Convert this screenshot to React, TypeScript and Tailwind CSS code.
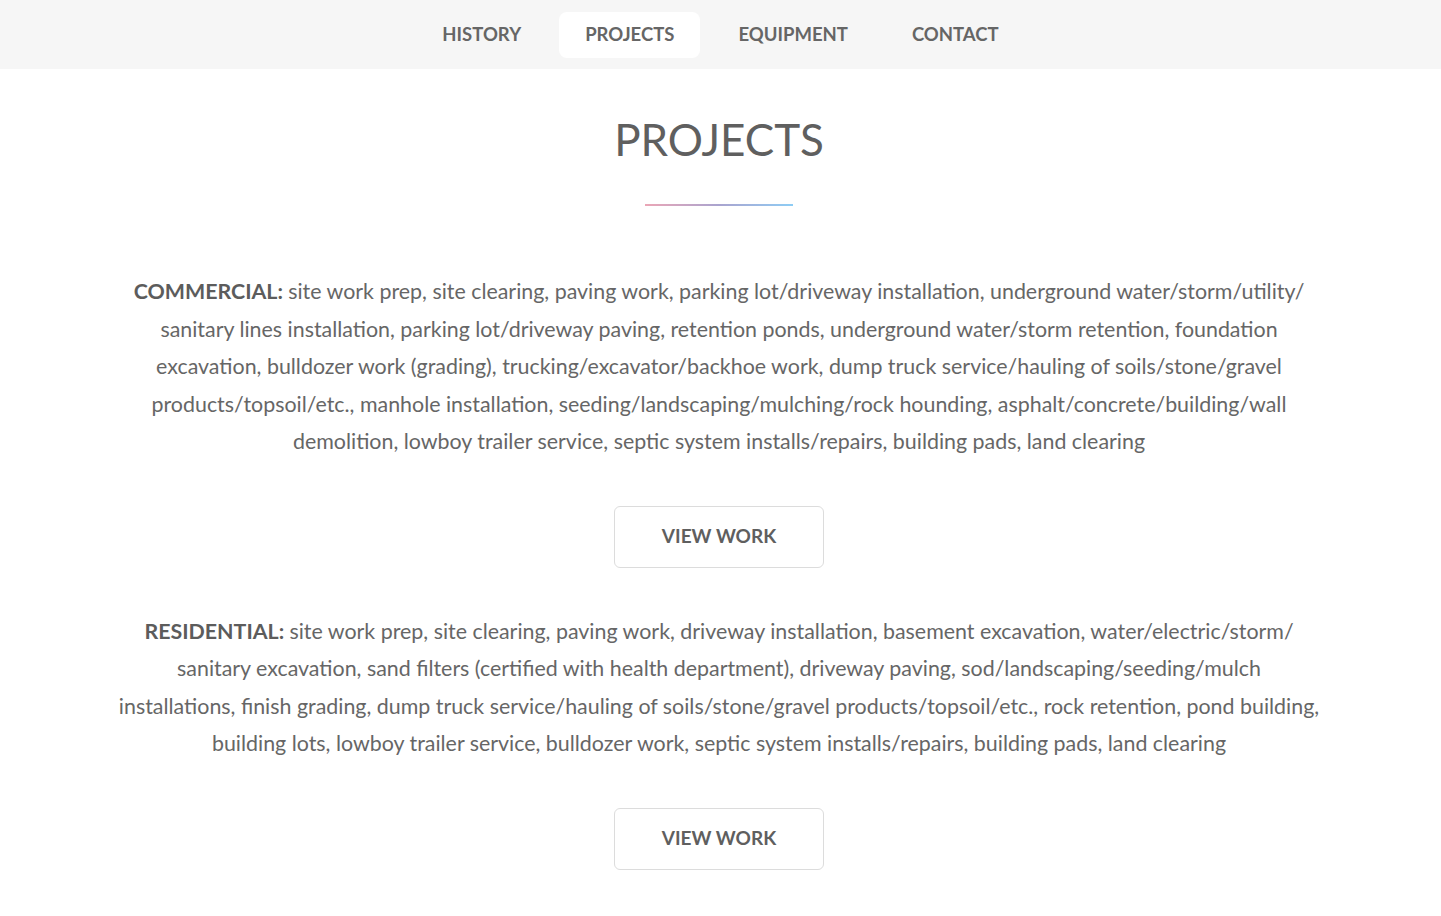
const navItems = ["HISTORY", "PROJECTS", "EQUIPMENT", "CONTACT"];

const commercial = [
  "site work prep, site clearing, paving work, parking lot/driveway installation, underground water/storm/utility/",
  "sanitary lines installation, parking lot/driveway paving, retention ponds, underground water/storm retention, foundation",
  "excavation, bulldozer work (grading), trucking/excavator/backhoe work, dump truck service/hauling of soils/stone/gravel",
  "products/topsoil/etc., manhole installation, seeding/landscaping/mulching/rock hounding, asphalt/concrete/building/wall",
  "demolition, lowboy trailer service, septic system installs/repairs, building pads, land clearing",
];

const residential = [
  "site work prep, site clearing, paving work, driveway installation, basement excavation, water/electric/storm/",
  "sanitary excavation, sand filters (certified with health department), driveway paving, sod/landscaping/seeding/mulch",
  "installations, finish grading, dump truck service/hauling of soils/stone/gravel products/topsoil/etc., rock retention, pond building,",
  "building lots, lowboy trailer service, bulldozer work, septic system installs/repairs, building pads, land clearing",
];

const Block = ({ label, lines }: { label: string; lines: string[] }) => (
  <div className="flex flex-col items-center">
    <p className="text-center text-[21.4px] leading-[37.5px] text-[#666]">
      {lines.map((line, idx) => (
        <span key={idx} className="block whitespace-nowrap">
          {idx === 0 && <strong className="font-bold text-[#5c5c5c]">{label} </strong>}
          {line}
        </span>
      ))}
    </p>
    <button className="mt-[45px] w-[210px] h-[62px] rounded-md border border-[#dcdcdc] bg-white text-[19px] font-bold text-[#5f5f5f]">
      VIEW WORK
    </button>
  </div>
);

export default function App() {
  return (
    <div className="min-h-screen bg-white font-['Lato','Liberation_Sans',sans-serif]">
      <nav className="h-[69px] bg-[#f6f6f6] flex items-center justify-center gap-[12px]">
        {navItems.map((item) => (
          <a
            key={item}
            className={`h-[46px] px-[26px] flex items-center rounded-lg text-[18.5px] font-bold text-[#666] ${
              item === "PROJECTS" ? "bg-white" : ""
            }`}
          >
            {item}
          </a>
        ))}
      </nav>

      <main className="pr-[3px]">
        <h1 className="mt-[44px] text-center text-[44px] leading-[52px] font-normal text-[#5f5f5f]">
          PROJECTS
        </h1>
        <div className="mx-auto mt-[39px] h-[2px] w-[148px] bg-gradient-to-r from-[#eba6b6] via-[#a9a4cf] to-[#8dcdf5]" />

        <div className="mt-[67px] flex flex-col items-center gap-[45px]">
          <Block label="COMMERCIAL:" lines={commercial} />
          <Block label="RESIDENTIAL:" lines={residential} />
        </div>
      </main>
    </div>
  );
}
